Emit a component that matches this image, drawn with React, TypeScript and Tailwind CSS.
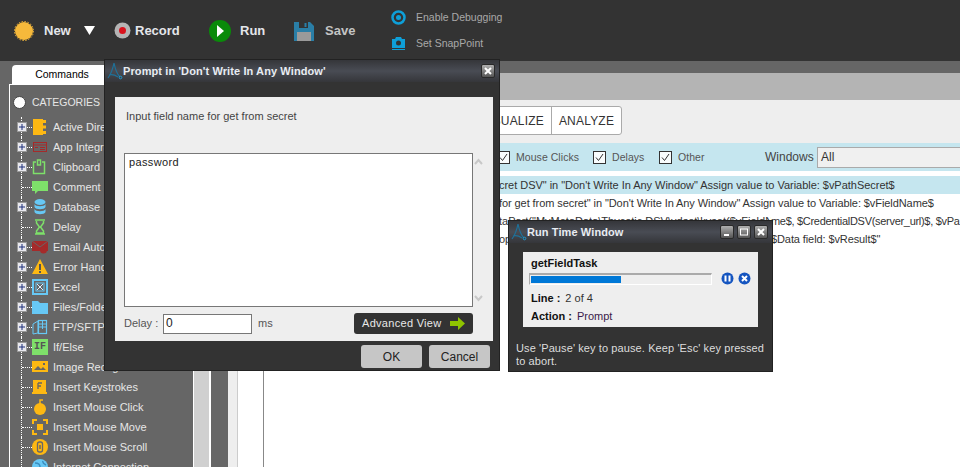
import React from "react";

const O = "#fdb813";
const G = "#7ee06a";
const B = "#67c8f5";
const R = "#a52a2a";

const icons: Record<string, React.ReactNode> = {
  active: (<><rect x="1" y="0" width="10" height="16" fill={O} /><path d="M12.5 1v3M12.5 6.500v3M12.500 12v3" stroke={O} strokeWidth="3" /></>),
  app: (<><rect x="1.500" y="3.500" width="13" height="9" fill="none" stroke={R} /><path d="M2 6h12M8 8.500h5M8 10.500h5M3 8.500h3" stroke={R} /></>),
  clip: (<path d="M4 3H1.500v11.500h11V3H10M5.500 1h3v5h-3z" fill="none" stroke={G} strokeWidth="1.500" />),
  comment: (<path d="M0 2h16v10H6l-3 3v-3H0z" fill={G} />),
  db: (<><ellipse cx="8" cy="3" rx="5.500" ry="3" fill={B} /><path d="M2.500 5c1 3 10 3 11 0v3c-1 3-10 3-11 0zM2.500 10c1 3 10 3 11 0v3c-1 3-10 3-11 0z" fill={B} /></>),
  delay: (<path d="M3 1h10M3 15h10M4.500 2v2l3 4-3 4v2h7v-2l-3-4 3-4V2" fill="none" stroke={G} strokeWidth="1.500" />),
  email: (<><path d="M0 2h16v10H0z" fill={R} /><path d="M0 2l8 6 8-6" fill="none" stroke="#666" /><circle cx="11.500" cy="11" r="3.500" fill={R} /></>),
  error: (<><path d="M8 0l8 15H0z" fill={O} /><path d="M8 5v6M8 12v2" stroke="#555" strokeWidth="2" /></>),
  excel: (<><rect x="1" y="1" width="14" height="14" fill="none" stroke={B} strokeWidth="2" /><rect x="4" y="4" width="8" height="8" fill="none" stroke={B} /><path d="M5 5l6 6M11 5l-6 6" stroke="#dfefff" /></>),
  files: (<path d="M0 2h6l2 2h8v11H0z" fill={B} />),
  ftp: (<><path d="M1 5l5-3v12l-5 1z" fill="none" stroke={B} /><rect x="6.500" y="1.500" width="8" height="13" fill="none" stroke={B} strokeWidth="1.200" /><path d="M7 5h7M7 8h7M10.500 2v8" stroke={B} /></>),
  image: (<><rect x="0" y="2" width="16" height="11" fill={O} /><path d="M2 11l4-4 3 3 2-2 3 3z" fill="#666" /><rect x="11" y="4" width="2" height="2" fill="#666" /></>),
  keys: (<><path d="M1 12V1h13v13H1" fill={O} /><path d="M0 13h15v2H0z" fill={O} /><path d="M6 4h4M6 4v6M6 7h3" stroke="#666" strokeWidth="1.300" fill="none" /></>),
  click: (<><ellipse cx="8" cy="10" rx="6" ry="6" fill={O} /><path d="M8 5V1h3" stroke={O} strokeWidth="1.500" fill="none" /></>),
  move: (<><rect x="5" y="5" width="6" height="6" fill={O} /><path d="M1 5V1h4M11 1h4v4M15 11v4h-4M5 15H1v-4" stroke={O} strokeWidth="2" fill="none" /></>),
  scroll: (<><circle cx="8" cy="8" r="8" fill={O} /><rect x="5.500" y="3" width="5" height="10" rx="2" fill="none" stroke="#666" strokeWidth="1.300" /><path d="M8 6v4" stroke="#666" strokeWidth="1.500" /></>),
  net: (<><circle cx="8" cy="8" r="8" fill={B} /><path d="M3 4c3 0 5 1 5 4s-3 2-3 5M11 2c-1 2 1 3 3 4" stroke="#3b8fc0" strokeWidth="1.500" fill="none" /></>),
};

function TreeIcon({ name }: { name: string }) {
  if (name === "ifelse") {
    return (
      <div className="flex h-[16px] w-[16px] items-center justify-center bg-[#7ee06a] font-['Liberation_Mono',monospace] text-[10px] font-bold leading-none text-[#555]">
        IF
      </div>
    );
  }
  return (
    <svg width="16" height="16" viewBox="0 0 16 16" className="shrink-0">
      {icons[name]}
    </svg>
  );
}

const tree: [string, string, boolean][] = [
  ["Active Directory", "active", true],
  ["App Integration", "app", true],
  ["Clipboard", "clip", true],
  ["Comment", "comment", false],
  ["Database", "db", true],
  ["Delay", "delay", false],
  ["Email Automation", "email", true],
  ["Error Handling", "error", true],
  ["Excel", "excel", true],
  ["Files/Folders", "files", true],
  ["FTP/SFTP", "ftp", true],
  ["If/Else", "ifelse", true],
  ["Image Recognition", "image", false],
  ["Insert Keystrokes", "keys", false],
  ["Insert Mouse Click", "click", false],
  ["Insert Mouse Move", "move", false],
  ["Insert Mouse Scroll", "scroll", false],
  ["Internet Connection", "net", false],
];

function TreeRow({ label, icon, plus }: { label: string; icon: string; plus: boolean }) {
  return (
    <div className="flex h-5 items-center">
      <div className="ml-[11px] flex h-5 w-[11px] shrink-0 items-center border-l border-dotted border-white">
        {plus && (
          <div className="-ml-[5px] flex h-[10px] w-[10px] shrink-0 items-center justify-center border border-[#9a9a9a] bg-[#e8e8ee]">
            <svg width="8" height="8" viewBox="0 0 8 8">
              <path d="M4 1v6M1 4h6" stroke="#1c2f7a" strokeWidth="1" />
            </svg>
          </div>
        )}
        <div className="flex-1 border-t border-dotted border-white" />
      </div>
      <TreeIcon name={icon} />
      <span className="ml-[5px] whitespace-nowrap text-[11px] text-[#e6e6e6]">{label}</span>
    </div>
  );
}

function Logo() {
  return (
    <svg width="16" height="18" viewBox="0 0 16 18" className="shrink-0">
      <path d="M1 16C4 12 6 6 7 1c1 5 3 11 6 14M2 13c3-1 6 0 9 2" fill="none" stroke="#1f7199" strokeWidth="1.200" />
      <circle cx="13.500" cy="15.500" r="1.300" fill="none" stroke="#1f9ad0" />
    </svg>
  );
}

function WinBtn({ kind }: { kind: "x" | "min" | "max" }) {
  return (
    <div className="flex h-[14px] w-[14px] items-center justify-center rounded-[2px] border border-[#2a2a2a] bg-gradient-to-b from-[#b0b0b0] to-[#555]">
      <svg width="10" height="10" viewBox="0 0 10 10">
        {kind === "x" && <path d="M2 2l6 6M8 2l-6 6" stroke="#fff" strokeWidth="2" />}
        {kind === "min" && <path d="M2 8h5" stroke="#fff" strokeWidth="2" />}
        {kind === "max" && <rect x="1.500" y="2" width="7" height="6" fill="none" stroke="#fff" />}
      </svg>
    </div>
  );
}

function Title({ text, children }: { text: string; children: React.ReactNode }) {
  return (
    <div className="flex h-[22px] items-center bg-gradient-to-b from-[#35363a] via-[#494c54] to-[#35363a] pl-[2px] pr-[4px]">
      <Logo />
      <span className="flex-1 whitespace-nowrap text-[11px] font-bold tracking-[0.1px] text-[#e8ecf2]">{text}</span>
      {children}
    </div>
  );
}

function Check({ label, className }: { label: string; className: string }) {
  return (
    <div className={`flex shrink-0 items-center ${className}`}>
      <div className="flex h-[13px] w-[13px] items-center justify-center border border-[#333] bg-[#f8fcfd]">
        <svg width="11" height="11" viewBox="0 0 11 11">
          <path d="M2 5.500l2.500 3L9 2" fill="none" stroke="#333" strokeWidth="1" />
        </svg>
      </div>
      <span className="ml-[6px] whitespace-nowrap text-[10.500px] leading-[14px] tracking-[0.05px] text-[#555]">{label}</span>
    </div>
  );
}

function Chevron({ up }: { up?: boolean }) {
  return (
    <svg width="9" height="7" viewBox="0 0 9 7">
      <path d={up ? "M1 6l3.500-4L8 6" : "M1 1l3.500 4L8 1"} fill="none" stroke="#c8c8c8" strokeWidth="2" />
    </svg>
  );
}

export default function App() {
  return (
    <div className="relative flex h-[467px] w-[960px] flex-col overflow-hidden bg-white font-['Liberation_Sans',sans-serif]">
      {/* Top toolbar */}
      <header className="flex h-[61px] shrink-0 items-center bg-[#333] pl-[14px] font-bold text-[#e4e6ea]">
        <svg width="20" height="20" viewBox="0 0 20 20" className="shrink-0">
          <circle cx="10" cy="10" r="9" fill="#f6b93b" />
          <circle cx="10" cy="10" r="9.500" fill="none" stroke="#f6b93b" strokeWidth="1" strokeDasharray="1.500 1.500" />
        </svg>
        <span className="ml-[10px] w-[27px] text-[13px]">New</span>
        <svg width="11" height="9" viewBox="0 0 11 9" className="ml-[13px]">
          <path d="M0 0h11L5.500 9z" fill="#fff" />
        </svg>
        <svg width="17" height="17" viewBox="0 0 17 17" className="ml-[19px]">
          <circle cx="8.500" cy="8.500" r="8" fill="#b4b4b4" />
          <circle cx="8.500" cy="8.500" r="3.500" fill="#d8121c" />
        </svg>
        <span className="ml-[4px] w-[44px] text-[13px]">Record</span>
        <svg width="22" height="22" viewBox="0 0 22 22" className="ml-[30px]">
          <circle cx="11" cy="11" r="11" fill="#0a8a0a" />
          <path d="M8 5l7 6-7 6z" fill="#fff" />
        </svg>
        <span className="ml-[9px] w-[25px] text-[13px]">Run</span>
        <svg width="20" height="20" viewBox="0 0 20 20" className="ml-[29px]">
          <path d="M0 1h16l4 4v15H0z" fill="#2a7ea6" />
          <rect x="5" y="1" width="9" height="6" fill="#333" />
          <rect x="10.500" y="2" width="2" height="4" fill="#2a7ea6" />
          <rect x="3" y="11" width="14" height="9" fill="#9a9a9a" />
        </svg>
        <span className="ml-[11px] w-[29px] text-[13px] text-[#c4c4c4]">Save</span>
        <div className="ml-[37px] flex flex-col gap-[11px] text-[10.500px] font-normal text-[#a9a9a9]">
          <div className="flex h-[15px] items-center">
            <svg width="15" height="15" viewBox="0 0 15 15">
              <circle cx="7.500" cy="7.500" r="6" fill="none" stroke="#0e9fd8" strokeWidth="2.500" />
              <circle cx="7.500" cy="7.500" r="2.500" fill="#0e9fd8" />
            </svg>
            <span className="ml-[10px]">Enable Debugging</span>
          </div>
          <div className="flex h-[15px] items-center">
            <svg width="15" height="15" viewBox="0 0 15 15">
              <path d="M1 3h3l1-2h5l1 2h3v9H1z" fill="#0e9fd8" />
              <circle cx="7.500" cy="7" r="2.500" fill="#333" />
              <path d="M1 13.500h13" stroke="#0e9fd8" />
            </svg>
            <span className="ml-[10px]">Set SnapPoint</span>
          </div>
        </div>
      </header>

      {/* Work area */}
      <div className="flex min-h-0 flex-1">
        {/* Left column */}
        <div className="flex h-full w-[228px] shrink-0 bg-[#666]">
          <div className="w-[193px] shrink-0 pt-[4px]">
            <div className="ml-[12px] flex h-[19px] w-[100px] items-center justify-center rounded-tl-[4px] bg-white text-[10.500px] text-black">
              Commands
            </div>
            <div className="ml-[9px] h-[400px] border-l border-t border-white">
              <div className="flex h-[32px] items-start pl-[3px] pt-[11px]">
                <div className="h-[13px] w-[13px] rounded-full border border-[#444] bg-white" />
                <span className="ml-[6px] text-[10.500px] leading-[13px] text-[#e6e6e6]">CATEGORIES</span>
              </div>
              {tree.map(([l, i, p]) => (
                <TreeRow key={l} label={l} icon={i} plus={p} />
              ))}
            </div>
          </div>
          <div className="w-[1px] bg-white" />
          <div className="w-[15px] bg-[#d0d0d0]" />
          <div className="w-[2px] bg-white" />
        </div>

        {/* Right column */}
        <div className="flex min-w-0 flex-1 flex-col">
          <div className="h-[12px] shrink-0 bg-[#666]" />
          <div className="h-[27px] shrink-0 bg-[#b4b4b4]" />
          <div className="flex h-[43px] shrink-0 items-start justify-end bg-[#eee] pr-[338px] pt-[6px]">
            <div className="flex h-[29px] items-center rounded-[3px] border border-[#aaa] bg-white text-[12px] text-[#333]">
              <span className="w-[90px] pr-[7px] text-right tracking-[0.2px]">VISUALIZE</span>
              <span className="flex h-full w-[70px] items-center justify-center border-l border-[#aaa] tracking-[0.2px]">ANALYZE</span>
            </div>
          </div>
          <div className="flex h-[28px] shrink-0 items-center overflow-hidden bg-[#c5e6ef] pl-[269px]">
            <Check label="Mouse Clicks" className="w-[96px]" />
            <Check label="Delays" className="w-[66px]" />
            <Check label="Other" className="w-[106px]" />
            <span className="w-[46px] shrink-0 text-[12px] text-[#444]">Windows</span>
            <div className="ml-[6px] flex h-[21px] w-[200px] shrink-0 items-center border border-[#aaa] bg-[#f0f0f0] pl-[3px] text-[12px] text-[#333]">
              All
            </div>
          </div>
          <div className="flex min-h-0 flex-1">
            <div className="w-[10px] shrink-0 border-r border-[#ccc] bg-[#eee]" />
            <div className="w-[26px] shrink-0 border-r border-[#888] bg-white" />
            <div className="min-w-0 flex-1 overflow-hidden whitespace-nowrap pt-[5px] text-[11px] leading-[19px] text-[#333]">
              <div className="h-[18px] bg-[#c5e6ef] pl-[235px] tracking-[-0.03px]">cret DSV" in "Don't Write In Any Window" Assign value to Variable: $vPathSecret$</div>
              <div className="h-[18px] pl-[235px] tracking-[-0.08px]">for get from secret" in "Don't Write In Any Window" Assign value to Variable: $vFieldName$</div>
              <div className="flex h-[18px] pl-[235px]">
                <span className="w-[272px] shrink-0 overflow-hidden">taPart("MyMetaData\Thycotic DSV\vdset\kvset($vFieldNa</span>
                <span className="tracking-[-0.3px]">me$, $CredentialDSV(server_url)$, $vPa</span>
              </div>
              <div className="flex h-[18px] pl-[235px]">
                <span className="w-[272px] shrink-0">op</span>
                <span className="tracking-[-0.1px]">$Data field: $vResult$"</span>
              </div>
            </div>
          </div>
        </div>
      </div>

      {/* Prompt window */}
      <section className="absolute left-[104px] top-[59px] flex h-[312px] w-[396px] flex-col border border-[#222] bg-[#333]">
        <Title text="Prompt in 'Don't Write In Any Window'">
          <WinBtn kind="x" />
        </Title>
        <div className="mx-[10px] mt-[15px] h-[244px] w-[378px] bg-[#eee] px-[9px]">
          <p className="pl-[2px] pt-[13px] text-[11px] leading-[13px] text-[#444]">Input field name for get from secret</p>
          <div className="mt-[30px] flex">
            <div className="h-[154px] w-[349px] border border-[#777] bg-white px-[4px] py-[2px] text-[11px] leading-[13px] tracking-[0.35px] text-[#222]">
              password
            </div>
            <div className="flex h-[154px] flex-1 flex-col items-center justify-between py-[5px]">
              <Chevron up />
              <Chevron />
            </div>
          </div>
          <div className="mt-[6px] flex items-center text-[11px] text-[#555]">
            <span className="w-[39px] shrink-0">Delay :</span>
            <div className="h-[20px] w-[89px] shrink-0 border border-[#777] bg-white pl-[2px] text-[12px] leading-[16px] text-[#222]">0</div>
            <span className="ml-[6px] w-[14px] shrink-0">ms</span>
            <div className="ml-[82px] flex h-[21px] w-[119px] shrink-0 items-center rounded-[3px] bg-[#333] pl-[8px] text-[11px] text-[#e8e8e8]">
              <span className="w-[79px] whitespace-nowrap tracking-[0.3px]">Advanced View</span>
              <svg width="15" height="13" viewBox="0 0 15 13" className="ml-[9px]">
                <path d="M0 4h8V0l7 6.500L8 13V9H0z" fill="#8fc400" />
              </svg>
            </div>
          </div>
        </div>
        <div className="mt-[4px] flex justify-end gap-[7px] pr-[9px]">
          <div className="flex h-[23px] w-[61px] items-center justify-center rounded-[3px] bg-[#c6c6c6] text-[12px] text-[#222]">OK</div>
          <div className="flex h-[23px] w-[61px] items-center justify-center rounded-[3px] bg-[#c6c6c6] text-[12px] text-[#222]">Cancel</div>
        </div>
      </section>

      {/* Run Time window */}
      <section className="absolute left-[508px] top-[220px] flex h-[152px] w-[265px] flex-col border border-[#222] bg-[#333]">
        <Title text="Run Time Window">
          <div className="flex gap-[3px]">
            <WinBtn kind="min" />
            <WinBtn kind="max" />
            <WinBtn kind="x" />
          </div>
        </Title>
        <div className="mx-[14px] mt-[9px] h-[75px] w-[235px] bg-[#eee] px-[6px] pt-[4px] text-[11px] text-[#111]">
          <div className="pl-[2px] font-bold leading-[14px]">getFieldTask</div>
          <div className="mt-[2px] flex items-center">
            <div className="h-[12px] w-[183px] border-t-2 border-l border-r border-b border-[#aaa] border-b-white border-r-white bg-[#eee] py-[1px] pl-[1px]">
              <div className="h-full w-[90px] bg-[#0078d7]" />
            </div>
            <svg width="13" height="13" viewBox="0 0 13 13" className="ml-[9px]">
              <circle cx="6.500" cy="6.500" r="6" fill="#1555c0" />
              <path d="M4.500 3.500v6M8.500 3.500v6" stroke="#fff" strokeWidth="2" />
            </svg>
            <svg width="13" height="13" viewBox="0 0 13 13" className="ml-[4px]">
              <circle cx="6.500" cy="6.500" r="6" fill="#1555c0" />
              <path d="M4 4l5 5M9 4l-5 5" stroke="#fff" strokeWidth="2" />
            </svg>
          </div>
          <div className="mt-[4px] pl-[2px] leading-[18px]">
            <b>Line :</b>
            <span className="ml-[5px] text-[#333]">2 of 4</span>
          </div>
          <div className="pl-[2px] leading-[18px]">
            <b>Action :</b>
            <span className="ml-[5px] text-[#3a1a4a]">Prompt</span>
          </div>
        </div>
        <p className="mt-[15px] pl-[7px] pr-[2px] text-[11px] leading-[13px] tracking-[0.1px] text-[#ddd]">
          Use 'Pause' key to pause. Keep 'Esc' key pressed to abort.
        </p>
      </section>
    </div>
  );
}
